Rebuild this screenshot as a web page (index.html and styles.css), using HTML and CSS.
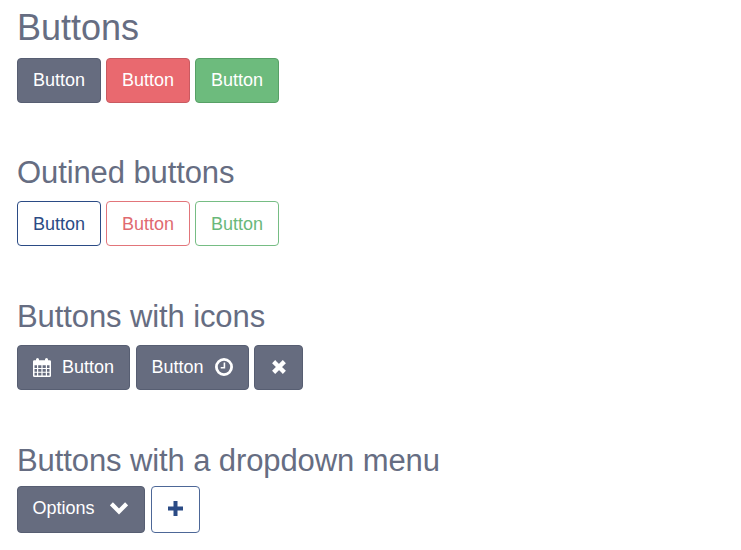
FILE: index.html
```html
<!DOCTYPE html>
<html lang="en">
<head>
<meta charset="utf-8">
<title>Buttons</title>
<link rel="stylesheet" href="styles.css">
</head>
<body>
<section class="group">
  <h1 class="title title-large">Buttons</h1>
  <div class="row">
    <button class="btn">Button</button>
    <button class="btn danger">Button</button>
    <button class="btn success">Button</button>
  </div>
</section>
<section class="group">
  <h2 class="title">Outined buttons</h2>
  <div class="row">
    <button class="btn outline">Button</button>
    <button class="btn outline outline-danger">Button</button>
    <button class="btn outline outline-success">Button</button>
  </div>
</section>
<section class="group">
  <h2 class="title">Buttons with icons</h2>
  <div class="row row-icons">
    <button class="btn with-icon">
      <svg class="icon calendar" viewBox="0 0 18 19"><path fill="currentColor" fill-rule="evenodd" d="M1.300 2.300H3V1.500Q3 0 4.500 0T6 1.500v.8h6V1.500Q12 0 13.500 0T15 1.500v.8h1.700Q18 2.300 18 3.600v14.100q0 1.300-1.300 1.300H1.300Q0 19 0 17.700V3.600Q0 2.300 1.300 2.300ZM1.500 7.200v2.700h2.500V7.200Zm3.700 0v2.700h3.200V7.200Zm4.400 0v2.700h3.200V7.200Zm4.400 0v2.700h2.500V7.200ZM1.500 11v2.700h2.500V11Zm3.700 0v2.700h3.200V11Zm4.400 0v2.700h3.200V11Zm4.400 0v2.700h2.500V11ZM1.500 14.800v2.700h2.500v-2.700Zm3.700 0v2.700h3.200v-2.700Zm4.400 0v2.700h3.200v-2.700Zm4.400 0v2.700h2.500v-2.700Z"/></svg>
      <span>Button</span>
    </button>
    <button class="btn with-icon">
      <span>Button</span>
      <svg class="icon clock" viewBox="0 0 18 18"><circle cx="9" cy="9" r="7.600" fill="none" stroke="currentColor" stroke-width="2.800"/><path d="M9.400 4.600v5.100H5.700" fill="none" stroke="currentColor" stroke-width="1.600"/></svg>
    </button>
    <button class="btn icon-only" aria-label="Close">
      <svg class="icon cross" viewBox="0 0 14 14"><path d="M3.200 3.200l7.600 7.600M10.800 3.200l-7.600 7.600" stroke="currentColor" stroke-width="4.400" stroke-linecap="square"/></svg>
    </button>
  </div>
</section>
<section class="group">
  <h2 class="title">Buttons with a dropdown menu</h2>
  <div class="row row-tall">
    <button class="btn options">
      <span>Options</span>
      <svg class="icon chevron" viewBox="0 0 18 13"><path d="M2.900 3.300L9 9.400l6.100-6.100" fill="none" stroke="currentColor" stroke-width="4.300" stroke-linecap="square"/></svg>
    </button>
    <button class="btn outline icon-only outline-muted" aria-label="Add">
      <svg class="icon plus" viewBox="0 0 15 15"><path d="M7.500 0v15M0 7.500h15" stroke="currentColor" stroke-width="4"/></svg>
    </button>
  </div>
</section>
</body>
</html>
```

FILE: styles.css
```css
* {
  box-sizing: border-box;
}

body {
  margin: 0;
  padding: 7px 17px 0;
  background: #fff;
  font-family: "Liberation Sans", Arial, sans-serif;
}

.group {
  height: 144px;
}

.group:first-child {
  height: 143px;
}

.group:last-child {
  height: auto;
}

.title {
  margin: 0;
  height: 51px;
  color: #666d82;
  font-size: 31px;
  font-weight: 400;
  line-height: 46px;
  letter-spacing: -0.1px;
}

.title-large {
  font-size: 36px;
  line-height: 41px;
  letter-spacing: 0;
}

.row {
  display: flex;
  gap: 5px;
  height: 45px;
}

.row-icons {
  gap: 5.5px;
}

.row-tall {
  gap: 5.5px;
  height: 47px;
  margin-top: -3px;
}

.btn {
  display: flex;
  align-items: center;
  justify-content: center;
  width: 84px;
  padding: 0 0 1px;
  border: 1px solid #575e72;
  border-radius: 4px;
  background: #666c7f;
  color: #fff;
  font: 18px "Liberation Sans", Arial, sans-serif;
}

.danger {
  border-color: #c95a61;
  background: #e9696f;
}

.success {
  border-color: #57a066;
  background: #6dbb7d;
}

.outline {
  padding: 1px 0 0;
  border-color: #2b4b85;
  background: #fff;
  color: #2b4b85;
}

.outline-danger {
  border-color: #e2757a;
  color: #e06a70;
}

.outline-success {
  border-color: #76bd84;
  color: #6ab87a;
}

.outline-muted {
  padding: 0 0 2px;
  border-color: #4d6797;
}

.with-icon {
  width: 113px;
  gap: 11px;
}

.icon-only {
  width: 49px;
}

.options {
  width: 128px;
  gap: 15px;
  padding: 0 2px 3px 0;
}

.icon {
  flex: none;
}

.calendar {
  width: 18px;
  height: 19px;
}

.clock {
  width: 18px;
  height: 18px;
}

.cross {
  width: 14px;
  height: 14px;
}

.chevron {
  width: 18px;
  height: 13px;
}

.plus {
  width: 15px;
  height: 15px;
}
```
